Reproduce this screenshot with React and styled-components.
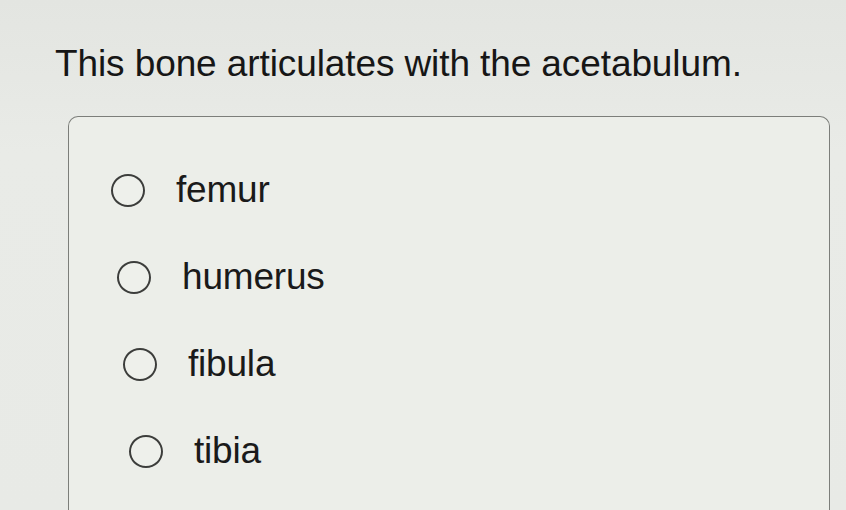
import React from "react";
import styled, { createGlobalStyle } from "styled-components";

const Global = createGlobalStyle`
  html, body { margin: 0; padding: 0; }
  body {
    width: 846px;
    height: 510px;
    overflow: hidden;
    background: linear-gradient(180deg, #e3e5e1 0%, #e9ebe7 30%, #e8eae6 100%);
    font-family: "Liberation Sans", Arial, sans-serif;
    color: #1b1b1b;
  }
`;

const Page = styled.main`
  display: flex;
  flex-direction: column;
  padding: 41px 0 0 0;
  height: 510px;
  box-sizing: border-box;
`;

const Question = styled.h1`
  margin: 0 0 0 55px;
  font-weight: 400;
  font-size: 37px;
  line-height: 46px;
  letter-spacing: -0.1px;
  color: #161616;
`;

const Card = styled.section`
  margin: 29px 0 0 68px;
  width: 762px;
  flex: 1;
  box-sizing: border-box;
  border: 1.5px solid #7c7e7a;
  border-bottom: none;
  border-radius: 10px 10px 0 0;
  background: #eceee9;
  padding: 55px 0 0 42px;
  display: flex;
  flex-direction: column;
  gap: 51px;
`;

const Option = styled.label`
  display: flex;
  align-items: center;
  gap: 31px;
  height: 36px;
  padding-left: ${(p) => p.$shift}px;
  cursor: pointer;
`;

const Radio = styled.span`
  width: 34px;
  height: 33px;
  border-radius: 50%;
  border: 2.5px solid #3c3d3b;
  box-sizing: border-box;
  background: #eef0eb;
  flex: none;
`;

const OptionText = styled.span`
  font-size: 37px;
  letter-spacing: -0.2px;
  color: #1a1a1a;
  line-height: 36px;
`;

const options = [
  { label: "femur", shift: 0 },
  { label: "humerus", shift: 6 },
  { label: "fibula", shift: 12 },
  { label: "tibia", shift: 18 },
];

export default function App() {
  return (
    <>
      <Global />
      <Page>
        <Question>This bone articulates with the acetabulum.</Question>
        <Card>
          {options.map((o) => (
            <Option key={o.label} $shift={o.shift}>
              <Radio />
              <OptionText>{o.label}</OptionText>
            </Option>
          ))}
        </Card>
      </Page>
    </>
  );
}
